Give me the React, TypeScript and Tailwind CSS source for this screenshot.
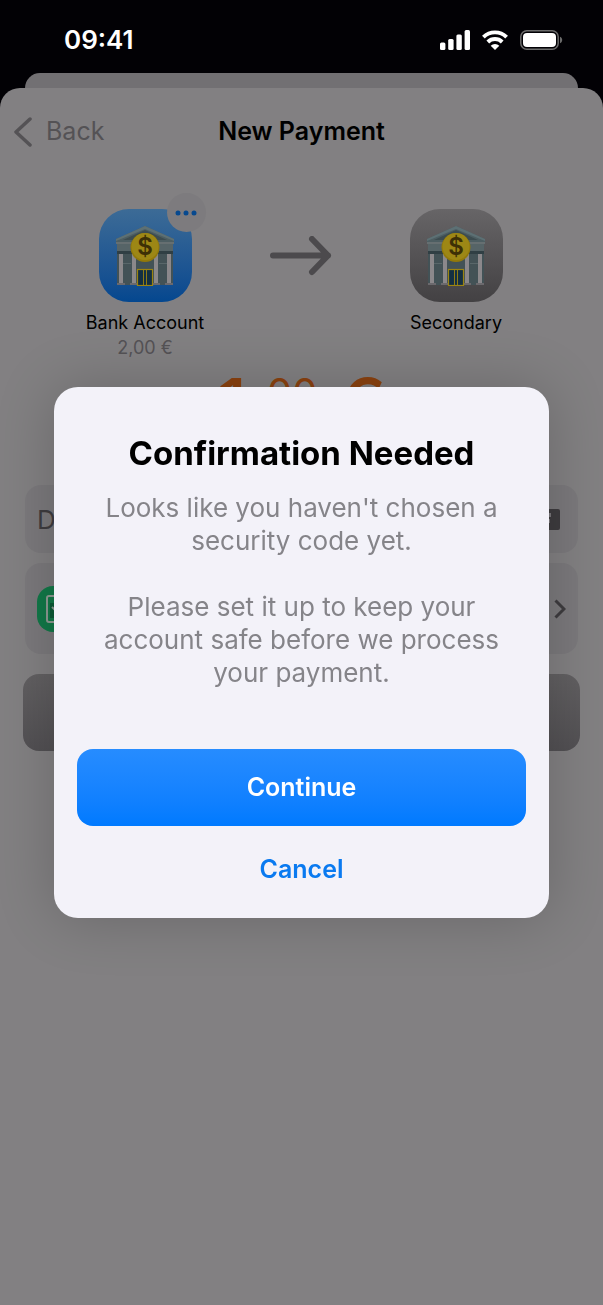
const ACCOUNTS = {
  from: { name: "Bank Account", balance: "2,00 €", tile: "from-[#3c6b96] to-[#04478f]" },
  to: { name: "Secondary", balance: "", tile: "from-[#676567] to-[#434143]" },
};

function SignalIcon() {
  return (
    <svg viewBox="0 0 30 20" className="h-5 w-[30px]" fill="white" aria-hidden="true">
      <rect x="0" y="12.5" width="5.4" height="7.5" rx="1.5" />
      <rect x="8.2" y="9" width="5.4" height="11" rx="1.5" />
      <rect x="16.4" y="4.5" width="5.4" height="15.5" rx="1.5" />
      <rect x="24.6" y="0" width="5.4" height="20" rx="1.5" />
    </svg>
  );
}

function WifiIcon() {
  return (
    <svg viewBox="0 0 26 20" className="h-5 w-[26px]" fill="none" stroke="white" strokeWidth="3.9" aria-hidden="true">
      <path d="M1.4 7.1a16.6 16.6 0 0 1 23.2 0" />
      <path d="M5.8 12a10.3 10.3 0 0 1 14.4 0" />
      <path d="M13 20l-4.300-4.300a6 6 0 0 1 8.600 0z" fill="white" stroke="none" />
    </svg>
  );
}

function BatteryIcon() {
  return (
    <svg viewBox="0 0 43 20" className="h-5 w-[43px]" aria-hidden="true">
      <rect x="0.8" y="0.8" width="37.4" height="18.4" rx="6" fill="none" stroke="#6b6b6b" strokeWidth="1.5" />
      <rect x="3" y="3" width="33" height="14" rx="4" fill="white" />
      <path d="M40 6.8c1.4.5 2.2 1.7 2.2 3.2s-.8 2.7-2.2 3.2z" fill="#6b6b6b" />
    </svg>
  );
}

function BankIcon() {
  return (
    <svg viewBox="0 0 60 60" className="size-[60px]" aria-hidden="true">
      <path d="M30 0L59 13v5H1v-5z" fill="#4d5e62" />
      <path d="M30 4L52 14H8z" fill="#3d4c50" />
      <path d="M1 13L30 0l29 13v2L30 3 1 15z" fill="#5d7074" />
      <rect x="1" y="16" width="58" height="2" fill="#666f71" />
      <rect x="2" y="18" width="56" height="41" fill="#435256" />
      <rect x="2" y="18" width="56" height="7" fill="#566467" />
      <rect x="2" y="25" width="56" height="3" fill="#303f44" />
      <rect x="8" y="37" width="8" height="1" fill="#59676a" />
      <rect x="44" y="37" width="8" height="1" fill="#59676a" />
      <g fill="#8b888b">
        <rect x="4" y="28" width="4" height="30" />
        <rect x="17" y="28" width="4" height="30" />
        <rect x="39" y="28" width="4" height="30" />
        <rect x="52" y="28" width="4" height="30" />
      </g>
      <g fill="#6b696d">
        <rect x="2" y="57" width="8" height="2" />
        <rect x="15" y="57" width="7" height="2" />
        <rect x="38" y="57" width="7" height="2" />
        <rect x="50" y="57" width="8" height="2" />
      </g>
      <rect x="22.5" y="43.5" width="15" height="16" fill="#142f42" stroke="#9c8410" strokeWidth="1.2" />
      <path d="M28.5 43v16M31.5 43v16" stroke="#9c8410" strokeWidth="0.9" />
      <circle cx="30" cy="21.5" r="14.5" fill="#92790a" />
      <circle cx="30" cy="20.5" r="13.5" fill="#9d8715" />
      <text x="30" y="29" textAnchor="middle" fontSize="24" fontWeight="600" fontFamily="Inter, sans-serif" fill="#3d3006">$</text>
    </svg>
  );
}

function Account({ account, menu }: { account: typeof ACCOUNTS.from; menu?: boolean }) {
  return (
    <div className="flex w-[156px] flex-col items-center">
      <div className={`relative flex size-[93px] items-center justify-center rounded-[30px] bg-linear-to-b ${account.tile}`}>
        <BankIcon />
        {menu && (
          <button
            type="button"
            aria-label="Account options"
            className="absolute -top-4 -right-3.5 flex size-[39px] items-center justify-center rounded-full bg-[#7d7b7e]"
          >
            <svg viewBox="0 0 22 6" className="h-1.5 w-[22px]" fill="#07498f" aria-hidden="true">
              <circle cx="3" cy="3" r="2.5" />
              <circle cx="11" cy="3" r="2.5" />
              <circle cx="19" cy="3" r="2.5" />
            </svg>
          </button>
        )}
      </div>
      <p className="mt-2 text-lg leading-[25px] text-black">{account.name}</p>
      <p className="text-lg leading-[25px] text-[#545255]">{account.balance}</p>
    </div>
  );
}

function StatusBar() {
  return (
    <div className="flex h-[73px] items-center justify-between pt-1.5 pr-10 pl-16 text-white">
      <span className="text-[26px] leading-8 font-semibold">09:41</span>
      <div className="flex items-center gap-3">
        <SignalIcon />
        <WifiIcon />
        <BatteryIcon />
      </div>
    </div>
  );
}

function PaymentForm() {
  return (
    <form className="mt-[45px] flex flex-col px-[23px]">
      <label className="mx-0.5 flex h-[68px] items-center justify-between rounded-2xl bg-[#7b797c] px-3">
        <input
          aria-label="Description"
          placeholder="Description"
          className="min-w-0 flex-1 bg-transparent text-[26px] text-[#3e3c3f] outline-none placeholder:text-[#3e3c3f]"
        />
        <svg viewBox="0 0 28 22" className="mr-1.5 h-[22px] w-7" aria-hidden="true">
          <rect x="0" y="1" width="28" height="21" rx="2" fill="#3e3c3f" />
          <path d="M15 6h3v2h-3M17 11v4" fill="none" stroke="#79777a" strokeWidth="2" />
        </svg>
      </label>
      <button
        type="button"
        aria-label="Payment method"
        className="mx-0.5 mt-2.5 flex h-[91px] items-center justify-between rounded-2xl bg-[#7b797c] px-3"
      >
        <span className="flex size-[46px] items-center justify-center rounded-2xl bg-[#127848]">
          <svg viewBox="0 0 28 28" className="size-7" fill="none" stroke="#8d9a92" strokeWidth="2" aria-hidden="true">
            <rect x="1" y="1" width="26" height="26" rx="2" />
            <rect x="4" y="8" width="20" height="15" fill="#0c5a36" stroke="none" />
            <path d="M6 12l3 3" />
          </svg>
        </span>
        <svg viewBox="0 0 12 20" className="h-5 w-3" fill="none" stroke="#3e3c3f" strokeWidth="3" aria-hidden="true">
          <path d="M1.500 1.500L10 10l-8.500 8.500" />
        </svg>
      </button>
      <button
        type="button"
        aria-label="Send payment"
        className="mt-5 h-[77px] rounded-2xl bg-linear-to-b from-[#626062] to-[#525053]"
      />
    </form>
  );
}

function ConfirmDialog() {
  return (
    <div className="fixed inset-0 flex items-center justify-center px-[54px]">
      <div
        role="dialog"
        aria-modal="true"
        aria-labelledby="confirm-title"
        className="flex w-full max-w-lg flex-col rounded-3xl bg-[#f3f2f9] px-[23px] pt-12 pb-6 text-center shadow-[0_0_60px_rgba(0,0,0,0.2)]"
      >
        <h2 id="confirm-title" className="text-[33px] leading-9 font-bold text-black">Confirmation Needed</h2>
        <div className="mt-5 flex flex-col gap-[33px] px-4 text-[26px] leading-[33px] text-[#858489]">
          <p>Looks like you haven't chosen a security code yet.</p>
          <p>Please set it up to keep your account safe before we process your payment.</p>
        </div>
        <button
          type="button"
          className="mt-[60px] h-[77px] rounded-2xl bg-linear-to-b from-[#268cff] to-[#007aff] text-[25px] font-semibold text-white"
        >
          Continue
        </button>
        <button type="button" className="mt-5 h-12 text-[25px] font-semibold text-[#0a7af0]">
          Cancel
        </button>
      </div>
    </div>
  );
}

export default function App() {
  return (
    <div className="flex min-h-screen flex-col bg-[#020105] font-['Inter',sans-serif]">
      <StatusBar />
      <div className="mx-[25px] h-[15px] rounded-t-2xl bg-[#727073]" />
      <main className="flex-1 rounded-t-[20px] bg-[#828082]">
        <header className="grid h-[88px] grid-cols-3 items-center">
          <button type="button" className="flex items-center gap-3.5 pl-3.5 text-[25px] text-[#545255]">
            <svg viewBox="0 0 18 30" className="h-[30px] w-[18px]" fill="none" stroke="currentColor" strokeWidth="3.500" strokeLinecap="round" strokeLinejoin="round" aria-hidden="true">
              <path d="M16 2L2 15l14 13" />
            </svg>
            Back
          </button>
          <h1 className="text-center text-[25px] font-semibold whitespace-nowrap text-black">New Payment</h1>
        </header>
        <section className="mt-[33px] flex justify-between pr-[69px] pl-[67px]">
          <Account account={ACCOUNTS.from} menu />
          <svg viewBox="0 0 62 40" className="mt-[27px] h-10 w-[62px]" fill="none" stroke="#4c4a4d" strokeWidth="6" strokeLinecap="round" strokeLinejoin="round" aria-hidden="true">
            <path d="M3 19.500h55M42 3l16 16.500L42 36" />
          </svg>
          <Account account={ACCOUNTS.to} />
        </section>
        <p className="mt-2 flex items-start justify-center text-[72px] leading-[72px] font-medium text-[#8b4210]">
          1<span className="ml-5 text-[40px] leading-[50px] font-normal">00</span>
          <span className="ml-5">€</span>
        </p>
        <PaymentForm />
      </main>
      <ConfirmDialog />
    </div>
  );
}
